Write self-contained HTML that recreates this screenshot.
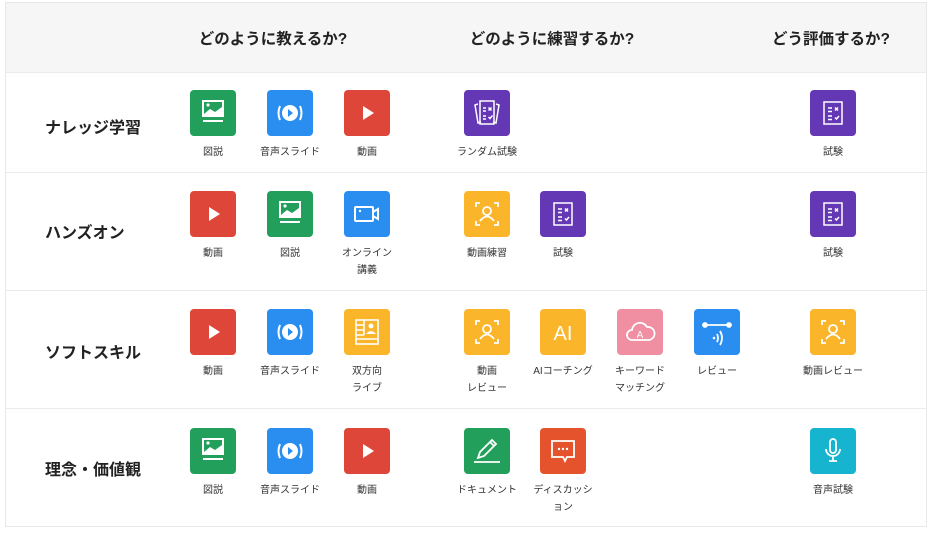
<!DOCTYPE html>
<html><head><meta charset="utf-8"><style>
body{margin:0;width:933px;height:534px;background:#fff;font-family:"Liberation Sans","Noto Sans CJK JP",sans-serif;position:relative;overflow:hidden}
.box{position:absolute;left:5px;top:2px;width:920px;height:523px;border:1px solid #e8e8e8}
.hd{position:absolute;left:6px;top:3px;width:920px;height:69px;background:#f6f6f6}
.ln{position:absolute;left:6px;width:920px;height:1px;background:#ebebeb}
.h{position:absolute;top:27px;font-size:15.5px;font-weight:bold;color:#222;transform:translateX(-50%);white-space:nowrap}
.r{position:absolute;left:45px;font-size:16px;font-weight:bold;color:#222;white-space:nowrap}
.i{position:absolute;width:46px;height:46px;border-radius:4px}
.i svg{display:block}
.t{position:absolute;width:100px;margin-left:-27px;text-align:center;font-size:10px;line-height:17px;color:#333}
</style></head><body>
<div class="box"></div><div class="hd"></div>
<div class="ln" style="top:72px"></div><div class="ln" style="top:172px"></div><div class="ln" style="top:290px"></div><div class="ln" style="top:408px"></div>
<div class="h" style="left:273px">どのように教えるか?</div>
<div class="h" style="left:552px">どのように練習するか?</div>
<div class="h" style="left:831px">どう評価するか?</div>
<div class="r" style="top:114px">ナレッジ学習</div>
<div class="r" style="top:219px">ハンズオン</div>
<div class="r" style="top:339px">ソフトスキル</div>
<div class="r" style="top:456px">理念・価値観</div>

<!-- row1 -->
<div class="i" style="left:190px;top:90px;background:#229f5a"><svg width="46" height="46" fill="none" stroke="#fff" stroke-width="2"><rect x="13" y="11" width="20" height="15"/><path d="M14 24l6-5 5 3 7-5v8H14z" fill="#fff" stroke="none"/><circle cx="18" cy="15" r="1.6" fill="#fff" stroke="none"/><path d="M13 31h20"/></svg></div>
<div class="t" style="left:190px;top:144px">図説</div>
<div class="i" style="left:267px;top:90px;background:#2a8ef0"><svg width="46" height="46" fill="none" stroke="#fff" stroke-width="2"><circle cx="23" cy="23" r="8" fill="#fff" stroke="none"/><path d="M21 19l5 4-5 4z" fill="#2a8ef0" stroke="none"/><path d="M13 16q-3 7 0 14M33 16q3 7 0 14"/></svg></div>
<div class="t" style="left:267px;top:144px">音声スライド</div>
<div class="i" style="left:344px;top:90px;background:#df463a"><svg width="46" height="46"><path d="M19 16l11 7-11 7z" fill="#fff"/></svg></div>
<div class="t" style="left:344px;top:144px">動画</div>
<div class="i" style="left:464px;top:90px;background:#6437b4"><svg width="46" height="46" fill="none" stroke="#fff" stroke-width="1.5"><path d="M14 14l-3 1 3 18 3-1M32 14l3 1-3 18-3-1"/><rect x="16" y="11" width="14" height="23"/><path d="M19 18h3M19 21h3M19 26h3M19 29h3M24.5 17.5l3 3M27.5 17.5l-3 3M24.5 27l1.5 1.5 2.5-3"/></svg></div>
<div class="t" style="left:464px;top:144px">ランダム試験</div>
<div class="i" style="left:810px;top:90px;background:#6437b4"><svg width="46" height="46" fill="none" stroke="#fff" stroke-width="1.5"><rect x="14" y="12" width="18" height="22"/><path d="M18 18h4M18 21.5h4M18 26h4M18 29.5h4M25 17.5l3 3M28 17.5l-3 3M25 27.5l1.5 1.5 2.5-3"/></svg></div>
<div class="t" style="left:810px;top:144px">試験</div>

<!-- row2 -->
<div class="i" style="left:190px;top:191px;background:#df463a"><svg width="46" height="46"><path d="M19 16l11 7-11 7z" fill="#fff"/></svg></div>
<div class="t" style="left:190px;top:245px">動画</div>
<div class="i" style="left:267px;top:191px;background:#229f5a"><svg width="46" height="46" fill="none" stroke="#fff" stroke-width="2"><rect x="13" y="11" width="20" height="15"/><path d="M14 24l6-5 5 3 7-5v8H14z" fill="#fff" stroke="none"/><circle cx="18" cy="15" r="1.6" fill="#fff" stroke="none"/><path d="M13 31h20"/></svg></div>
<div class="t" style="left:267px;top:245px">図説</div>
<div class="i" style="left:344px;top:191px;background:#2a8ef0"><svg width="46" height="46" fill="none" stroke="#fff" stroke-width="2"><rect x="11" y="16" width="18" height="14" rx="1"/><path d="M29 21l5-3v10l-5-3"/><circle cx="16" cy="20" r="1.2" fill="#fff" stroke="none"/></svg></div>
<div class="t" style="left:344px;top:245px">オンライン<br>講義</div>
<div class="i" style="left:464px;top:191px;background:#fbb52a"><svg width="46" height="46" fill="none" stroke="#fff" stroke-width="1.8"><path d="M12 16v-4h4M30 12h4v4M34 30v4h-4M16 34h-4v-4"/><circle cx="23" cy="20" r="4"/><path d="M16 30q7-9 14 0"/></svg></div>
<div class="t" style="left:464px;top:245px">動画練習</div>
<div class="i" style="left:540px;top:191px;background:#6437b4"><svg width="46" height="46" fill="none" stroke="#fff" stroke-width="1.5"><rect x="14" y="12" width="18" height="22"/><path d="M18 18h4M18 21.5h4M18 26h4M18 29.5h4M25 17.5l3 3M28 17.5l-3 3M25 27.5l1.5 1.5 2.5-3"/></svg></div>
<div class="t" style="left:540px;top:245px">試験</div>
<div class="i" style="left:810px;top:191px;background:#6437b4"><svg width="46" height="46" fill="none" stroke="#fff" stroke-width="1.5"><rect x="14" y="12" width="18" height="22"/><path d="M18 18h4M18 21.5h4M18 26h4M18 29.5h4M25 17.5l3 3M28 17.5l-3 3M25 27.5l1.5 1.5 2.5-3"/></svg></div>
<div class="t" style="left:810px;top:245px">試験</div>

<!-- row3 -->
<div class="i" style="left:190px;top:309px;background:#df463a"><svg width="46" height="46"><path d="M19 16l11 7-11 7z" fill="#fff"/></svg></div>
<div class="t" style="left:190px;top:363px">動画</div>
<div class="i" style="left:267px;top:309px;background:#2a8ef0"><svg width="46" height="46" fill="none" stroke="#fff" stroke-width="2"><circle cx="23" cy="23" r="8" fill="#fff" stroke="none"/><path d="M21 19l5 4-5 4z" fill="#2a8ef0" stroke="none"/><path d="M13 16q-3 7 0 14M33 16q3 7 0 14"/></svg></div>
<div class="t" style="left:267px;top:363px">音声スライド</div>
<div class="i" style="left:344px;top:309px;background:#fbb52a"><svg width="46" height="46" fill="none" stroke="#fff" stroke-width="1.6"><rect x="12" y="11" width="22" height="24"/><path d="M12 16h8M12 21h8M12 26h8M20 11v15M12 30h22"/><circle cx="27" cy="17" r="2.5" fill="#fff" stroke="none"/><path d="M22 25q5-6 10 0z" fill="#fff" stroke="none"/></svg></div>
<div class="t" style="left:344px;top:363px">双方向<br>ライブ</div>
<div class="i" style="left:464px;top:309px;background:#fbb52a"><svg width="46" height="46" fill="none" stroke="#fff" stroke-width="1.8"><path d="M12 16v-4h4M30 12h4v4M34 30v4h-4M16 34h-4v-4"/><circle cx="23" cy="20" r="4"/><path d="M16 30q7-9 14 0"/></svg></div>
<div class="t" style="left:464px;top:363px">動画<br>レビュー</div>
<div class="i" style="left:540px;top:309px;background:#fbb52a"><svg width="46" height="46"><text x="23" y="31" text-anchor="middle" font-family="Liberation Sans" font-size="20" fill="#fff">AI</text></svg></div>
<div class="t" style="left:540px;top:363px">AIコーチング</div>
<div class="i" style="left:617px;top:309px;background:#f08ea2"><svg width="46" height="46" fill="none" stroke="#fff" stroke-width="1.8"><path d="M15 31a5 5 0 0 1 0-10 8 8 0 0 1 15-3 6 6 0 0 1 2 13z"/><text x="23" y="29" text-anchor="middle" font-family="Liberation Sans" font-size="10" fill="#fff" stroke="none">A</text></svg></div>
<div class="t" style="left:617px;top:363px">キーワード<br>マッチング</div>
<div class="i" style="left:694px;top:309px;background:#2a8ef0"><svg width="46" height="46" fill="none" stroke="#fff" stroke-width="1.8"><path d="M11 16h24"/><circle cx="11" cy="16" r="2" fill="#fff"/><circle cx="35" cy="16" r="2" fill="#fff"/><circle cx="20" cy="29" r="1.3" fill="#fff" stroke="none"/><path d="M23 25q2 4 0 8M26 22q4 7 0 14"/></svg></div>
<div class="t" style="left:694px;top:363px">レビュー</div>
<div class="i" style="left:810px;top:309px;background:#fbb52a"><svg width="46" height="46" fill="none" stroke="#fff" stroke-width="1.8"><path d="M12 16v-4h4M30 12h4v4M34 30v4h-4M16 34h-4v-4"/><circle cx="23" cy="20" r="4"/><path d="M16 30q7-9 14 0"/></svg></div>
<div class="t" style="left:810px;top:363px">動画レビュー</div>

<!-- row4 -->
<div class="i" style="left:190px;top:428px;background:#229f5a"><svg width="46" height="46" fill="none" stroke="#fff" stroke-width="2"><rect x="13" y="11" width="20" height="15"/><path d="M14 24l6-5 5 3 7-5v8H14z" fill="#fff" stroke="none"/><circle cx="18" cy="15" r="1.6" fill="#fff" stroke="none"/><path d="M13 31h20"/></svg></div>
<div class="t" style="left:190px;top:482px">図説</div>
<div class="i" style="left:267px;top:428px;background:#2a8ef0"><svg width="46" height="46" fill="none" stroke="#fff" stroke-width="2"><circle cx="23" cy="23" r="8" fill="#fff" stroke="none"/><path d="M21 19l5 4-5 4z" fill="#2a8ef0" stroke="none"/><path d="M13 16q-3 7 0 14M33 16q3 7 0 14"/></svg></div>
<div class="t" style="left:267px;top:482px">音声スライド</div>
<div class="i" style="left:344px;top:428px;background:#df463a"><svg width="46" height="46"><path d="M19 16l11 7-11 7z" fill="#fff"/></svg></div>
<div class="t" style="left:344px;top:482px">動画</div>
<div class="i" style="left:464px;top:428px;background:#229f5a"><svg width="46" height="46" fill="none" stroke="#fff" stroke-width="1.8"><path d="M14 30l2-6 12-12 4 4-12 12z"/><path d="M26 14l4 4"/><path d="M10 34h26"/></svg></div>
<div class="t" style="left:464px;top:482px">ドキュメント</div>
<div class="i" style="left:540px;top:428px;background:#e5532c"><svg width="46" height="46" fill="none" stroke="#fff" stroke-width="1.8"><path d="M12 13h22v16h-7l-2 4-2-4H12z"/><circle cx="19" cy="21" r="1.2" fill="#fff" stroke="none"/><circle cx="23" cy="21" r="1.2" fill="#fff" stroke="none"/><circle cx="27" cy="21" r="1.2" fill="#fff" stroke="none"/></svg></div>
<div class="t" style="left:540px;top:482px">ディスカッシ<br>ョン</div>
<div class="i" style="left:810px;top:428px;background:#16b4cf"><svg width="46" height="46" fill="none" stroke="#fff" stroke-width="1.8"><rect x="20" y="11" width="6" height="14" rx="3"/><path d="M16 21a7 7 0 0 0 14 0M23 28v5M19 33h8"/></svg></div>
<div class="t" style="left:810px;top:482px">音声試験</div>
</body></html>
